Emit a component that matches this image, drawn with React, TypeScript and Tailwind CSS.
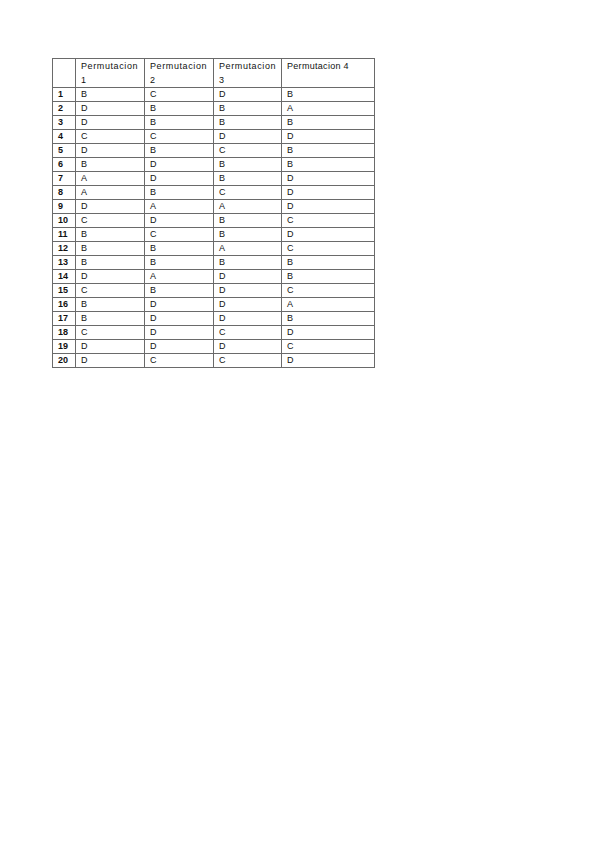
import { Fragment } from "react";

const rows: string[][] = [
  ["B", "C", "D", "B"],
  ["D", "B", "B", "A"],
  ["D", "B", "B", "B"],
  ["C", "C", "D", "D"],
  ["D", "B", "C", "B"],
  ["B", "D", "B", "B"],
  ["A", "D", "B", "D"],
  ["A", "B", "C", "D"],
  ["D", "A", "A", "D"],
  ["C", "D", "B", "C"],
  ["B", "C", "B", "D"],
  ["B", "B", "A", "C"],
  ["B", "B", "B", "B"],
  ["D", "A", "D", "B"],
  ["C", "B", "D", "C"],
  ["B", "D", "D", "A"],
  ["B", "D", "D", "B"],
  ["C", "D", "C", "D"],
  ["D", "D", "D", "C"],
  ["D", "C", "C", "D"],
];

const cell = "border-r border-b border-[#6a6a6a] pl-[5px] overflow-hidden whitespace-nowrap";

export default function App() {
  return (
    <div className="min-h-[848px] w-[599px] bg-white pt-[58px] pl-[52px] font-['Liberation_Sans',Arial,sans-serif] text-[9px] text-[#111]">
      <div className="grid w-[323px] grid-cols-[23px_69px_69px_68px_93px] border-l border-t border-[#6a6a6a]">
        <div className={`${cell} h-[29px]`} />
        {["1", "2", "3"].map((n) => (
          <div key={n} className={`${cell} h-[29px] leading-[14px] tracking-[0.6px]`}>
            <div>Permutacion</div>
            <div>{n}</div>
          </div>
        ))}
        <div className={`${cell} h-[29px] leading-[14px] tracking-[0.3px]`}>Permutacion 4</div>

        {rows.map((r, i) => (
          <Fragment key={i}>
            <div className={`${cell} h-[14px] leading-[13px] font-bold`}>{i + 1}</div>
            {r.map((v, j) => (
              <div key={j} className={`${cell} h-[14px] leading-[13px]`}>
                {v}
              </div>
            ))}
          </Fragment>
        ))}
      </div>
    </div>
  );
}
